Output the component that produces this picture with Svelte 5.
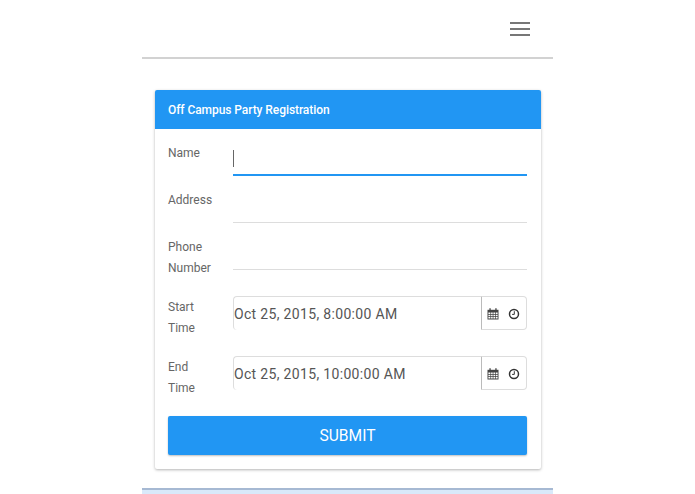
<script>
    const textRows = [
        { label: 'Name', focused: true },
        { label: 'Address' },
        { label: 'Phone Number' },
    ];
    const timeRows = [
        { label: 'Start Time', value: 'Oct 25, 2015, 8:00:00 AM' },
        { label: 'End Time', value: 'Oct 25, 2015, 10:00:00 AM' },
    ];
</script>

<div class="page">
    <header>
        <button class="menu" aria-label="Menu">
            <span></span>
            <span></span>
            <span></span>
        </button>
    </header>

    <section class="card">
        <h1>Off Campus Party Registration</h1>
        <form on:submit|preventDefault>
            {#each textRows as row}
                <div class="row">
                    <label for={row.label}>{row.label}</label>
                    <div class="field" class:focused={row.focused}>
                        <input id={row.label} type="text" />
                        {#if row.focused}<i class="caret"></i>{/if}
                    </div>
                </div>
            {/each}
            {#each timeRows as row}
                <div class="row">
                    <label for={row.label}>{row.label}</label>
                    <div class="picker">
                        <input id={row.label} type="text" value={row.value} />
                        <div class="addon">
                            <svg width="12" height="12" viewBox="0 0 12 12">
                                <path fill="#444" d="M0.5 1.8h11v9.7h-11z" />
                                <path fill="#fff" d="M1.4 4.6h2v1.4h-2zM4.1 4.6h1.6v1.4h-1.6zM6.4 4.6h1.6v1.4h-1.6zM8.7 4.6h1.9v1.4h-1.9zM1.4 6.7h2v1.4h-2zM4.1 6.7h1.6v1.4h-1.6zM6.4 6.7h1.6v1.4h-1.6zM8.7 6.7h1.9v1.4h-1.9zM1.4 8.8h2v1.7h-2zM4.1 8.8h1.6v1.7h-1.6zM6.4 8.8h1.6v1.7h-1.6zM8.7 8.8h1.9v1.7h-1.9z" />
                                <path fill="#444" d="M2.4 0.3h1.3v2.6h-1.3zM8.3 0.3h1.3v2.6h-1.3z" />
                            </svg>
                            <svg width="12" height="12" viewBox="0 0 12 12">
                                <circle cx="6" cy="6" r="4.5" fill="none" stroke="#333" stroke-width="1.5" />
                                <path fill="none" stroke="#333" d="M6.3 3.2v3.2h-2.2" />
                            </svg>
                        </div>
                    </div>
                </div>
            {/each}
            <button class="submit" type="submit">SUBMIT</button>
        </form>
    </section>

    <footer></footer>
</div>

<style>
    :global(body) {
        margin: 0;
        background: #fff;
    }
    .page {
        width: 411px;
        height: 494px;
        margin-left: 142px;
        overflow: hidden;
        font-family: Roboto, 'Liberation Sans', sans-serif;
    }
    header {
        display: flex;
        justify-content: flex-end;
        align-items: center;
        height: 57px;
        border-bottom: 2px solid #d2d2d2;
        padding-right: 23px;
    }
    .menu {
        display: flex;
        flex-direction: column;
        gap: 4px;
        width: 20px;
        padding: 0;
        background: none;
        border: 0;
    }
    .menu span {
        height: 2px;
        background: #777;
    }
    .card {
        margin: 31px 12px 19px 13px;
        height: 379px;
        box-sizing: border-box;
        border-radius: 2px;
        background: #fff;
        box-shadow: 0 1px 3px rgba(0, 0, 0, 0.3);
    }
    h1 {
        margin: 0;
        height: 39px;
        padding-left: 13px;
        line-height: 40px;
        font-size: 12px;
        font-weight: 500;
        letter-spacing: -0.07px;
        color: #fff;
        background: #2196f3;
        border-radius: 2px 2px 0 0;
    }
    form {
        padding: 13px 14px 14px 13px;
    }
    .row {
        display: grid;
        grid-template-columns: 65px 294px;
        margin-bottom: 13px;
    }
    label {
        padding: 1px 20px 4px 0;
        font-size: 12px;
        line-height: 21px;
        color: #666;
    }
    .field {
        position: relative;
        height: 34px;
        box-sizing: border-box;
        border-bottom: 1px solid #ddd;
    }
    .field.focused {
        border-bottom: 2px solid #2196f3;
    }
    .field input {
        width: 100%;
        height: 100%;
        padding: 0;
        border: 0;
        outline: 0;
        background: none;
    }
    .caret {
        position: absolute;
        left: 0;
        top: 8px;
        width: 1px;
        height: 17px;
        background: #666;
    }
    .picker {
        display: flex;
        height: 34px;
    }
    .picker input {
        flex: 1;
        min-width: 0;
        box-sizing: border-box;
        padding: 1px 0 0;
        border: 0;
        border-top: 1px solid #ddd;
        border-left: 1px solid #ddd;
        border-radius: 4px 0 0 4px;
        outline: 0;
        font: 14px Roboto, 'Liberation Sans', sans-serif;
        letter-spacing: 0.33px;
        color: #555;
    }
    .addon {
        display: flex;
        align-items: center;
        gap: 9px;
        width: 46px;
        box-sizing: border-box;
        padding: 2px 0 0 5px;
        border: 1px solid #ddd;
        border-left-color: #bbb;
        border-radius: 0 4px 4px 0;
    }
    .submit {
        display: block;
        width: 100%;
        height: 39px;
        padding: 1px 0 0;
        border: 0;
        border-radius: 2px;
        background: #2196f3;
        box-shadow: 0 1px 2px rgba(0, 0, 0, 0.25);
        color: #fff;
        font: 15.6px Roboto, 'Liberation Sans', sans-serif;
    }
    footer {
        height: 6px;
        border-top: 2px solid #a6b9d3;
        background: #d9e9fa;
    }
</style>
